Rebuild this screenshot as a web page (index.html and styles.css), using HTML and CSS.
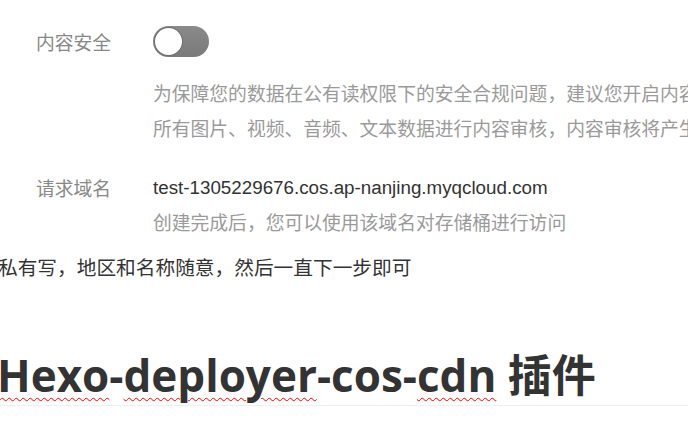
FILE: index.html
```html
<!DOCTYPE html>
<html lang="zh-CN">
<head>
<meta charset="utf-8">
<link rel="stylesheet" href="styles.css">
</head>
<body>
<div class="page">
  <div class="shot">
    <div class="row row-switch">
      <span class="label">内容安全</span>
      <span class="switch"><span class="knob"></span></span>
    </div>
    <div class="desc">
      <div class="line">为保障您的数据在公有读权限下的安全合规问题，建议您开启内容</div>
      <div class="line">所有图片、视频、音频、文本数据进行内容审核，内容审核将产生</div>
    </div>
    <div class="row row-domain">
      <span class="label">请求域名</span>
      <span class="value">test-1305229676.cos.ap-nanjing.myqcloud.com</span>
    </div>
    <div class="hint">创建完成后，您可以使用该域名对存储桶进行访问</div>
  </div>
  <p class="para">私有写，地区和名称随意，然后一直下一步即可</p>
  <h1 class="title"><span class="typo">Hexo</span>-<span class="typo">deployer</span>-cos-<span class="typo">cdn</span> 插件</h1>
</div>
</body>
</html>
```

FILE: styles.css
```css
html, body {
  margin: 0;
  padding: 0;
  background: #ffffff;
}
body {
  width: 688px;
  height: 440px;
  overflow: hidden;
}
.page {
  width: 688px;
  overflow: hidden;
}
.shot {
  padding-top: 26px;
  font-family: "Noto Sans CJK SC", "Liberation Sans", sans-serif;
  font-size: 18.8px;
}
.row {
  display: flex;
  align-items: center;
  padding-left: 36px;
}
.label {
  width: 117px;
  flex: none;
  color: #888888;
  white-space: nowrap;
}
.row-switch {
  height: 31px;
}
.switch {
  width: 56px;
  height: 31px;
  border-radius: 16px;
  background: linear-gradient(#8a8a8a, #7a7a7a);
  box-sizing: border-box;
  padding: 2px;
  display: flex;
  align-items: center;
}
.knob {
  width: 27px;
  height: 27px;
  border-radius: 50%;
  background: #ffffff;
  box-shadow: 0 0 0 1px #6f6f6f;
}
.desc {
  margin-top: 17.5px;
  padding-left: 153px;
  color: #9a9a9a;
  line-height: 35px;
  white-space: nowrap;
}
.row-domain {
  margin-top: 28.5px;
  height: 30px;
  line-height: 30px;
}
.value {
  font-family: "Liberation Sans", Arial, sans-serif;
  color: #333333;
  white-space: nowrap;
}
.hint {
  margin-top: 4px;
  padding-left: 153px;
  line-height: 30px;
  color: #9a9a9a;
  white-space: nowrap;
}
.para {
  margin: 16px 0 0 -2px;
  font-family: "Open Sans", "Noto Sans CJK SC", sans-serif;
  font-size: 19.7px;
  line-height: 30px;
  color: #333333;
  white-space: nowrap;
}
.title {
  margin: 63px 0 0 0;
  padding-left: 0;
  font-family: "Open Sans", "Noto Sans CJK SC", sans-serif;
  font-weight: 700;
  font-size: 44px;
  line-height: 59px;
  color: #333333;
  white-space: nowrap;
  border-bottom: 1px solid #eeeeee;
  text-indent: -3px;
}
.typo {
  text-decoration-line: underline;
  text-decoration-style: wavy;
  text-decoration-color: #ff0000;
  text-decoration-thickness: 1px;
  text-underline-offset: 5px;
}
```
